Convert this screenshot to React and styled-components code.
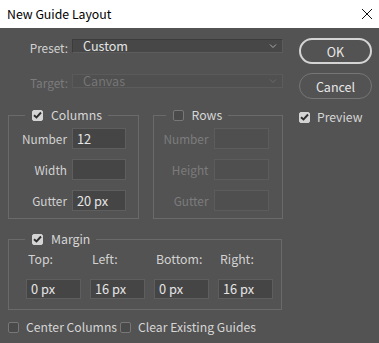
import React from 'react';
import styled, { createGlobalStyle } from 'styled-components';

const GlobalStyle = createGlobalStyle`
  html, body {
    margin: 0;
    padding: 0;
    background: #535353;
    font-family: "Noto Sans CJK KR", "Noto Sans", sans-serif;
    font-size: 12px;
  }
`;

const TitleBar = styled.div`
  height: 28px;
  background: #fff;
  display: flex;
  align-items: center;
  justify-content: space-between;
  padding: 0 6px 0 7px;
  color: #000;
  font-size: 12.3px;
  line-height: 16px;
`;

const Body = styled.div`
  display: flex;
  gap: 16px;
  padding: 10px 0 0 8px;
`;

const Main = styled.div`
  width: 275px;
  display: flex;
  flex-direction: column;
`;

const FieldRow = styled.div`
  display: flex;
  align-items: center;
  height: 15px;
  margin-bottom: ${p => p.$mb || 0}px;
`;

const Label = styled.span`
  width: ${p => p.$w || 60}px;
  text-align: right;
  padding-right: ${p => p.$gap || 4}px;
  box-sizing: border-box;
  color: ${p => (p.$disabled ? '#7c7c7c' : '#d2d2d2')};
  font-size: 11.8px;
  line-height: 16px;
  white-space: nowrap;
  position: relative;
  top: ${p => p.$shift || 0}px;
`;

const Select = styled.div`
  flex: 1;
  height: 14px;
  box-sizing: border-box;
  display: flex;
  align-items: center;
  justify-content: space-between;
  padding: 0 5px 0 10px;
  background: ${p => (p.$disabled ? '#505050' : '#474747')};
  border: 1px solid ${p => (p.$disabled ? '#5a5a5a' : '#3c3c3c')};
  border-right-color: #5c5c5c;
  border-bottom-color: #5c5c5c;
  color: ${p => (p.$disabled ? '#767676' : '#e4e4e4')};
  font-size: 12.6px;
  line-height: 14px;
`;

const GroupRow = styled.div`
  display: flex;
  gap: 14px;
  margin-top: 20px;
`;

const Group = styled.fieldset`
  margin: ${p => p.$mt || 0}px 0 0;
  min-inline-size: 0;
  width: ${p => p.$w}px;
  box-sizing: border-box;
  border: 1px solid #6a6a6a;
  padding: ${p => p.$pad};
`;

const Legend = styled.legend`
  display: flex;
  align-items: center;
  gap: 8px;
  margin-left: ${p => p.$ml ?? 16}px;
  padding: 0 6px 0 7px;
  height: 14px;
  line-height: 14px;
  color: #d6d6d6;
  font-size: 12.3px;
`;

const Box = styled.span`
  width: 11px;
  height: 11px;
  border-radius: 2px;
  box-sizing: border-box;
  display: inline-flex;
  align-items: center;
  justify-content: center;
  flex: none;
  background: ${p => (p.$checked ? '#d4d4d4' : '#4a4a4a')};
  border: 1px solid ${p => (p.$checked ? '#d4d4d4' : '#777')};
`;

const Stack = styled.div`
  display: flex;
  flex-direction: column;
  gap: 10px;
`;

const InputRow = styled.div`
  display: flex;
  align-items: center;
`;

const Input = styled.div`
  width: ${p => p.$w || 54}px;
  height: ${p => p.$h || 21}px;
  box-sizing: border-box;
  background: ${p => (p.$disabled ? '#4f4f4f' : '#454545')};
  border: 1px solid ${p => (p.$disabled ? '#5c5c5c' : '#5e5e5e')};
  color: #e6e6e6;
  font-size: 12.8px;
  line-height: 16px;
  display: flex;
  align-items: center;
  padding-left: 4px;
`;

const MarginGrid = styled.div`
  display: grid;
  grid-template-columns: repeat(4, 55px);
  column-gap: 9px;
  row-gap: 12px;
`;

const MarginLabel = styled.span`
  color: #d2d2d2;
  padding-left: 2px;
  font-size: 12.3px;
  line-height: 16px;
`;

const CheckRow = styled.div`
  display: flex;
  align-items: center;
  margin-top: 9px;
`;

const Check = styled.label`
  display: flex;
  align-items: center;
  gap: 7px;
  color: #d6d6d6;
  font-size: 12.2px;
  line-height: 16px;
  margin: ${p => p.$mt || 0}px ${p => p.$mr || 0}px 0 0;
`;

const Side = styled.div`
  width: 73px;
  display: flex;
  flex-direction: column;
`;

const Button = styled.button`
  height: 26px;
  border-radius: 13px;
  background: transparent;
  border: ${p => (p.$primary ? '2px solid #d4d4d4' : '1.5px solid #767676')};
  color: #e8e8e8;
  font-family: inherit;
  font-size: 12.5px;
  padding: 0;
  margin-bottom: 9px;
`;

const Tick = () => (
  <svg width="9" height="8" viewBox="0 0 9 8">
    <path d="M1 4.2 L3.5 6.5 L8 1.5" fill="none" stroke="#2e2e2e" strokeWidth="1.9" />
  </svg>
);

const CheckBox = ({ checked }) => <Box $checked={checked}>{checked && <Tick />}</Box>;

const Chevron = ({ color }) => (
  <svg width="8" height="6" viewBox="0 0 8 6">
    <path d="M1 1.5 L4 4.5 L7 1.5" fill="none" stroke={color} strokeWidth="1" />
  </svg>
);

const App = () => (
  <>
    <GlobalStyle />
    <TitleBar>
      <span>New Guide Layout</span>
      <svg width="12" height="12" viewBox="0 0 12 12">
        <path d="M1 1 L11 11 M11 1 L1 11" stroke="#111" strokeWidth="1" />
      </svg>
    </TitleBar>
    <Body>
      <Main>
        <FieldRow $mb={20}>
          <Label $w={64} $shift={2}>Preset:</Label>
          <Select>
            <span>Custom</span>
            <Chevron color="#aaa" />
          </Select>
        </FieldRow>
        <FieldRow>
          <Label $w={64} $shift={2} $disabled>Target:</Label>
          <Select $disabled>
            <span>Canvas</span>
            <Chevron color="#6a6a6a" />
          </Select>
        </FieldRow>

        <GroupRow>
          <Group $w={131} $pad="6px 11px 7px 0">
            <Legend>
              <CheckBox checked />
              Columns
            </Legend>
            <Stack>
              <InputRow>
                <Label $w={63} $gap={5}>Number</Label>
                <Input>12</Input>
              </InputRow>
              <InputRow>
                <Label $w={63} $gap={5}>Width</Label>
                <Input />
              </InputRow>
              <InputRow>
                <Label $w={63} $gap={5}>Gutter</Label>
                <Input>20 px</Input>
              </InputRow>
            </Stack>
          </Group>
          <Group $w={131} $pad="6px 11px 7px 0">
            <Legend $ml={12}>
              <CheckBox />
              Rows
            </Legend>
            <Stack>
              <InputRow>
                <Label $w={60} $gap={5} $disabled>Number</Label>
                <Input $w={55} $disabled />
              </InputRow>
              <InputRow>
                <Label $w={60} $gap={5} $disabled>Height</Label>
                <Input $w={55} $disabled />
              </InputRow>
              <InputRow>
                <Label $w={60} $gap={5} $disabled>Gutter</Label>
                <Input $w={55} $disabled />
              </InputRow>
            </Stack>
          </Group>
        </GroupRow>

        <Group $w={274} $mt={13} $pad="5px 0 10px 17px">
          <Legend $ml={-1}>
            <CheckBox checked />
            Margin
          </Legend>
          <MarginGrid>
            <MarginLabel>Top:</MarginLabel>
            <MarginLabel>Left:</MarginLabel>
            <MarginLabel>Bottom:</MarginLabel>
            <MarginLabel>Right:</MarginLabel>
            <Input $w={55} $h={20}>0 px</Input>
            <Input $w={55} $h={20}>16 px</Input>
            <Input $w={55} $h={20}>0 px</Input>
            <Input $w={55} $h={20}>16 px</Input>
          </MarginGrid>
        </Group>

        <CheckRow>
          <Check $mr={3}>
            <CheckBox />
            Center Columns
          </Check>
          <Check>
            <CheckBox />
            Clear Existing Guides
          </Check>
        </CheckRow>
      </Main>

      <Side>
        <Button $primary>OK</Button>
        <Button>Cancel</Button>
        <Check $mt={1}>
          <CheckBox checked />
          Preview
        </Check>
      </Side>
    </Body>
  </>
);

export default App;
